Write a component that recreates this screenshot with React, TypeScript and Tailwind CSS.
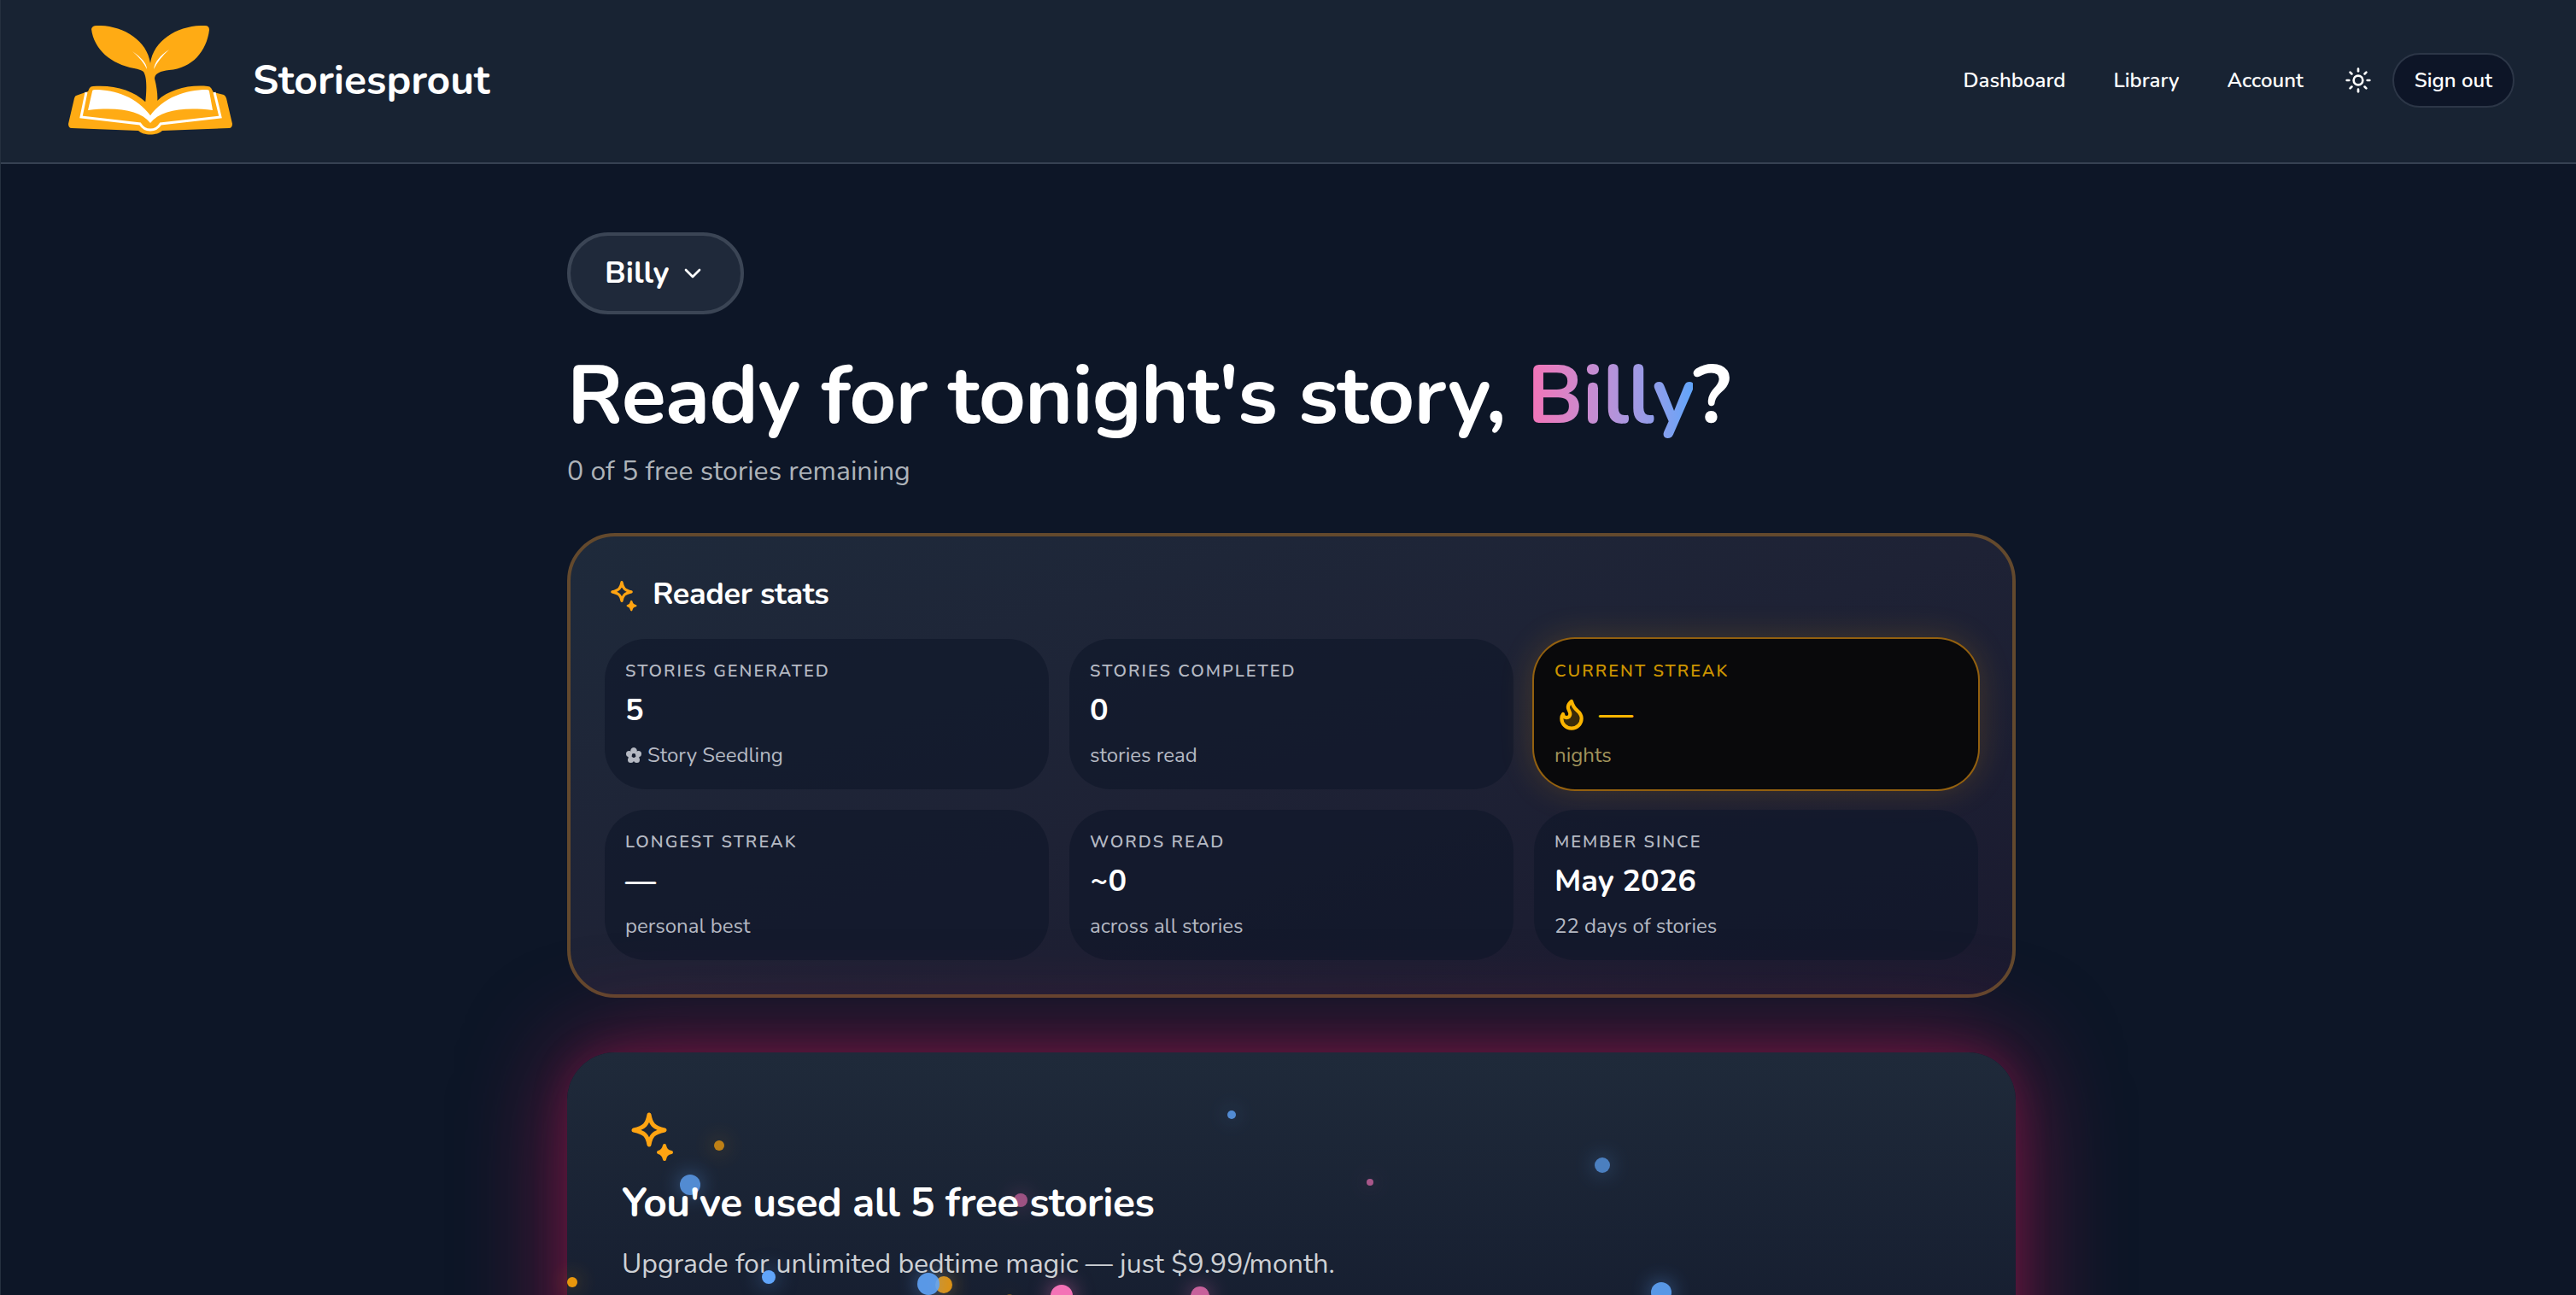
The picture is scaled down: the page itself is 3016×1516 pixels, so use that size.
import { ChevronDown, Flame, Sun } from 'lucide-react';

type Stat = {
    label: string;
    value: string;
    note: string;
    streak?: boolean;
    flower?: boolean;
};

const stats: Stat[] = [
    { label: 'Stories generated', value: '5', note: 'Story Seedling', flower: true },
    { label: 'Stories completed', value: '0', note: 'stories read' },
    { label: 'Current streak', value: '—', note: 'nights', streak: true },
    { label: 'Longest streak', value: '—', note: 'personal best' },
    { label: 'Words read', value: '~0', note: 'across all stories' },
    { label: 'Member since', value: 'May 2026', note: '22 days of stories' },
];

const tones = {
    blue: 'bg-[#60a5fa] shadow-[0_0_24px_rgba(96,165,250,0.6)]',
    pink: 'bg-[#f472b6] shadow-[0_0_24px_rgba(244,114,182,0.6)]',
    amber: 'bg-[#f59e0b] shadow-[0_0_24px_rgba(245,158,11,0.6)]',
};

const fireflies: { x: number; y: number; size: number; opacity: number; tone: keyof typeof tones }[] = [
    { x: 178, y: 109, size: 12, opacity: 0.75, tone: 'amber' },
    { x: 144, y: 155, size: 24, opacity: 0.8, tone: 'blue' },
    { x: 531, y: 173, size: 16, opacity: 0.6, tone: 'pink' },
    { x: 778, y: 73, size: 10, opacity: 0.8, tone: 'blue' },
    { x: 940, y: 152, size: 8, opacity: 0.65, tone: 'pink' },
    { x: 1212, y: 132, size: 18, opacity: 0.7, tone: 'blue' },
    { x: 6, y: 269, size: 12, opacity: 0.95, tone: 'amber' },
    { x: 236, y: 263, size: 16, opacity: 1, tone: 'blue' },
    { x: 441, y: 272, size: 20, opacity: 0.9, tone: 'amber' },
    { x: 423, y: 271, size: 26, opacity: 0.9, tone: 'blue' },
    { x: 518, y: 287, size: 8, opacity: 0.4, tone: 'amber' },
    { x: 579, y: 285, size: 26, opacity: 1, tone: 'pink' },
    { x: 741, y: 285, size: 22, opacity: 0.8, tone: 'pink' },
    { x: 1281, y: 281, size: 24, opacity: 0.9, tone: 'blue' },
];

const Logo = () => (
    <svg className="w-48 h-32" viewBox="0 0 192 128" fill="none">
        {/* Book cover */}
        <path fill="#ffab14" d="M9 82L23 77L25 73Q26 71 29 71C54 69 76 76 90 89L104 88C118 75 140 69 163 71Q166 71 167 73L170 78L182 81Q184 82 185 85L192 115Q192 120 188 120L110 123C104 129 88 129 82 123L4 120Q0 120 0 115L7 85Q8 82 9 82Z" />
        <path d="M21 78L15 107L84 115C87 120 91 122 96 122C101 122 105 120 108 115L178 107L171 78" stroke="#fff" strokeWidth="3" />
        <path d="M25 73L18 104L84 112L96 118L108 112L175 104L167 73C140 70 118 76 104 90H90C76 76 52 70 25 73Z" fill="#ffab14" />
        {/* Pages */}
        <path fill="#fff" d="M28 77Q28 75 31 75C56 75 80 84 96 105V114C84 99 58 95 23 99Z" />
        <path fill="#fff" d="M165 77Q165 75 162 75C137 75 112 84 96 105V114C108 99 134 95 169 99Z" />
        {/* Sprout */}
        <path fill="#ffab14" d="M27 4Q28 0 33 0C62 -1 92 16 96 44C100 16 130 -1 160 0Q165 0 165 5C162 30 145 50 118 52C108 53 101 56 101 62C104 74 105 82 104 92L96 105L90 92C92 74 92 60 88 54C86 52 82 51 77 50C50 45 30 28 27 4Z" />
        <path fill="#fff" d="M75 30C85 37 92 44 92 51C89 44 83 37 75 30Z" />
        <path fill="#fff" d="M118 28C107 35 101 43 100 51C104 43 110 35 118 28Z" />
    </svg>
);

const Sparkles = ({ className }: { className: string }) => (
    <svg className={className} viewBox="0 0 64 64" fill="none" stroke="#ffa412" strokeWidth="5" strokeLinejoin="round">
        <path d="M32 9C34 20 37 24 50 27C37 30 34 33 32 44C30 33 27 30 14 27C27 24 30 20 32 9Z" />
        <path fill="#ffa412" strokeWidth="4" d="M50 45C51 50 53 52 58 53C53 54 51 56 50 61C49 56 47 54 43 53C47 52 49 50 50 45Z" />
    </svg>
);

const Flower = () => (
    <svg className="size-5 fill-current" viewBox="0 0 20 20" fillRule="evenodd">
        <path d="M10 1A4 4 0 0 1 13.500 6.500A4 4 0 0 1 15.500 13.500A4 4 0 0 1 10 17A4 4 0 0 1 4.500 13.500A4 4 0 0 1 6.500 6.500A4 4 0 0 1 10 1ZM10 8A2.500 2.500 0 1 0 10 13A2.500 2.500 0 1 0 10 8Z" />
        <circle cx="4.500" cy="8.500" r="3.500" />
        <circle cx="15.500" cy="8.500" r="3.500" />
        <circle cx="6.500" cy="15.500" r="3.500" />
        <circle cx="13.500" cy="15.500" r="3.500" />
    </svg>
);

const StatTile = ({ label, value, note, streak, flower }: Stat) => (
    <div className={streak ? 'rounded-[48px] p-6 bg-[#09090b] ring-2 ring-[#93600f] shadow-[0_0_40px_rgba(245,158,11,0.2)]' : 'rounded-[48px] p-6 bg-[#0f172a]/65'}>
        <dt className={streak ? 'text-[20px] leading-7 font-semibold uppercase tracking-widest text-[#cc9400]' : 'text-[20px] leading-7 font-semibold uppercase tracking-widest text-[#b5b9c3]'}>
            {label}
        </dt>
        <dd className={streak ? 'mt-2 flex items-center gap-3 text-[40px] leading-14 font-bold text-[#fbb500]' : 'mt-2 text-[36px] leading-12 font-bold'}>
            {streak && <Flame className="size-10 fill-[#fbb500]/20" strokeWidth={2.5} />}
            {value}
        </dd>
        <dd className={streak ? 'mt-1 text-2xl text-[#a0935b]' : 'mt-3 flex items-center gap-1.5 text-2xl text-[#b5b9c3]'}>
            {flower && <Flower />}
            {note}
        </dd>
    </div>
);

const App = () => {
    return (
        <div className="h-screen overflow-hidden bg-[#0d1627] border-l border-[#25303f] text-white font-['Nunito','Lato',sans-serif]">
            <header className="flex items-center justify-between bg-[#182333] border-b-2 border-[#364152] pl-[79px] pr-18 pt-[30px] pb-8">
                <a href="#" className="flex items-center gap-6">
                    <Logo />
                    <span className="text-5xl font-bold">Storiesprout</span>
                </a>
                <nav className="flex items-center text-2xl font-semibold">
                    <div className="flex items-center gap-14">
                        <a href="#dashboard">Dashboard</a>
                        <a href="#library">Library</a>
                        <a href="#account">Account</a>
                    </div>
                    <button aria-label="Toggle theme" className="ml-12">
                        <Sun className="size-8" />
                    </button>
                    <button className="ml-6 h-16 px-6 rounded-full border-2 border-[#2c3647] bg-[#0d1527]">Sign out</button>
                </nav>
            </header>

            <main className="mx-auto w-full max-w-[1703px] pl-[7px] pt-20">
                <button className="flex items-center gap-3 h-24 px-10 rounded-full border-4 border-[#3b4555] bg-[#1f293a] text-[36px] font-bold">
                    Billy
                    <ChevronDown className="size-8" />
                </button>

                <h1 className="mt-12 text-8xl font-bold tracking-[-0.01em] leading-[96px]">
                    Ready for tonight's story, <span className="bg-linear-to-r from-[#f472b6] to-[#60a5fa] bg-clip-text text-transparent">Billy</span>?
                </h1>
                <p className="mt-4 text-[32px] leading-12 text-[#adb3b9]">0 of 5 free stories remaining</p>

                <section className="mt-12 rounded-[56px] border-4 border-[#63492d] bg-linear-to-br from-[#1e2a3b] via-[#1e2235] to-[#1a1a2f] p-10">
                    <div className="flex items-center gap-4 h-14 mb-6">
                        <Sparkles className="size-10" />
                        <h2 className="text-[36px] font-bold tracking-[-0.01em]">Reader stats</h2>
                    </div>
                    <dl className="grid grid-cols-3 gap-6">
                        {stats.map((stat) => (
                            <StatTile key={stat.label} {...stat} />
                        ))}
                    </dl>
                </section>

                <section className="relative mt-16 min-h-[640px] rounded-[56px] bg-linear-to-b from-[#1f2a3a] via-[#161e30] to-[#0f172a] p-16 shadow-[0_0_40px_rgba(157,23,77,0.3),0_0_120px_rgba(157,23,77,0.75)]">
                    {fireflies.map(({ x, y, size, opacity, tone }) => (
                        <span
                            key={`${x}-${y}`}
                            className={`absolute rounded-full pointer-events-none ${tones[tone]}`}
                            style={{ left: x - size / 2, top: y - size / 2, width: size, height: size, opacity }}
                        />
                    ))}
                    <div className="relative">
                        <Sparkles className="size-16" />
                        <h2 className="mt-4 text-5xl leading-16 font-bold tracking-[-0.01em]">You've used all 5 free stories</h2>
                        <p className="mt-4 text-[32px] leading-12 text-[#ced1d5]">Upgrade for unlimited bedtime magic — just $9.99/month.</p>
                    </div>
                </section>
            </main>
        </div>
    );
};

export default App;
